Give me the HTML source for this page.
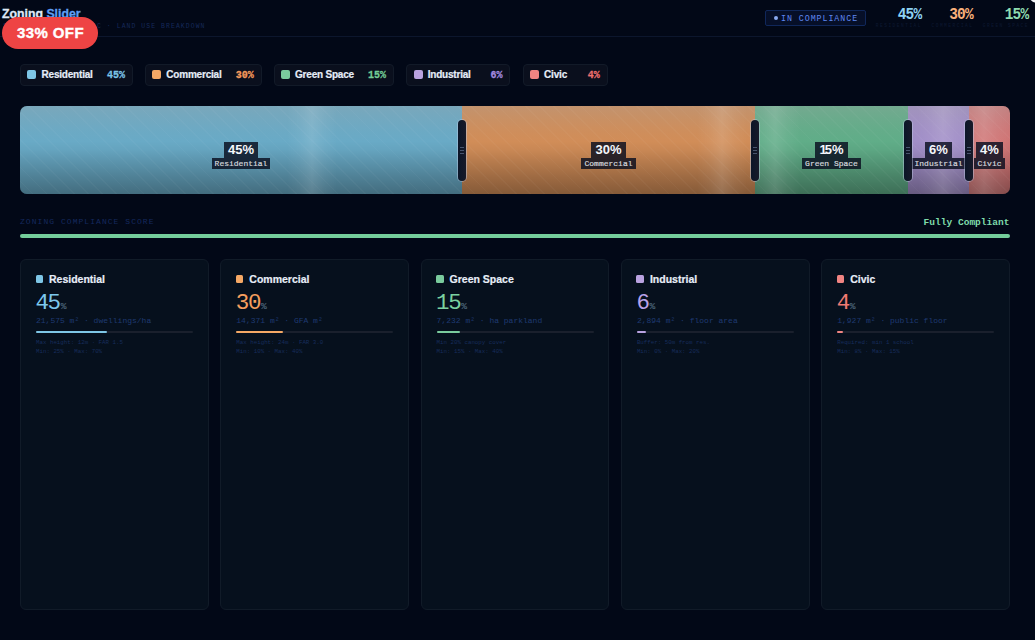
<!DOCTYPE html>
<html><head><meta charset="utf-8">
<style>
*{margin:0;padding:0;box-sizing:border-box}
html,body{width:1035px;height:640px;overflow:hidden;background:#020817}
body{position:relative;font-family:"Liberation Sans",sans-serif;color:#e2e8f0}
.mono{font-family:"Liberation Mono",monospace}
.abs{position:absolute;white-space:nowrap}
/* header */
.hdr-line{position:absolute;left:0;top:36px;width:1035px;height:1px;background:#0c162d}
.title{left:2px;top:6.6px;font-size:12.3px;font-weight:bold;line-height:14px;-webkit-text-stroke:0.3px currentColor}
.title .a{color:#dfe8f6}.title .b{color:#5e9ff5}
.sub{left:3.2px;top:23px;font-size:6.4px;letter-spacing:1.1px;color:#16295a;line-height:8px}
.badge{left:2px;top:17px;width:96px;height:31.5px;border-radius:16px;background:#ee4444;color:#fff;font-weight:bold;font-size:15px;letter-spacing:0.4px;-webkit-text-stroke:0.35px #fff;line-height:31.5px;text-align:center;padding-left:1px}
.comp{left:765px;top:10px;width:101px;height:15.5px;border:1px solid #10275a;background:#060f28;border-radius:2px}
.comp .dot{position:absolute;left:7.5px;top:4.8px;width:4px;height:4px;border-radius:50%;background:#8aa9f0}
.comp .t{position:absolute;left:15px;top:3px;font-size:8.3px;letter-spacing:0.95px;color:#5f87f0;line-height:10px}
.stat{top:6.5px;text-align:right}
.stat .n{font-family:"Liberation Mono",monospace;font-weight:bold;font-size:14.5px;letter-spacing:-0.75px;line-height:16px;display:block;transform:scaleY(1.13);transform-origin:50% 80%}
.stat .l{font-family:"Liberation Mono",monospace;font-size:4.5px;letter-spacing:1.5px;color:#0d1832;display:block;line-height:6px;margin-top:0.5px;margin-right:-0.5px}
/* chips */
.chip{top:64px;height:22px;border:1px solid #121a28;background:#0a0f1d;border-radius:4px}
.chip .sw{position:absolute;left:6.4px;top:5px;width:9px;height:9px;border-radius:2px}
.chip .lb{position:absolute;top:3px;font-size:10px;font-weight:bold;letter-spacing:-0.2px;color:#e6edf8;line-height:14px;-webkit-text-stroke:0.2px #e6edf8}
.chip .pc{position:absolute;right:7px;top:3.8px;font-family:"Liberation Mono",monospace;font-weight:bold;font-size:10px;line-height:14px;transform:scaleY(1.16);transform-origin:50% 50%;-webkit-text-stroke:0.25px currentColor}
/* bar */
.bar{left:20px;top:106px;width:990px;height:88px;border-radius:7px;overflow:hidden}
.seg{position:absolute;top:0;height:88px;overflow:hidden}
.seg .shade{position:absolute;inset:0;background:linear-gradient(180deg,rgba(160,160,160,0.30) 0%,rgba(160,160,160,0.16) 15%,rgba(160,160,160,0.06) 28%,rgba(160,160,160,0) 40%,rgba(0,0,0,0.04) 50%,rgba(0,0,0,0.12) 62%,rgba(0,0,0,0.24) 80%,rgba(0,0,0,0.36) 100%)}
.seg .stripes{position:absolute;inset:0;background:repeating-linear-gradient(45deg,rgba(255,255,255,0) 0px,rgba(255,255,255,0) 8.6px,rgba(255,255,255,0.028) 8.6px,rgba(255,255,255,0.028) 9.8px)}
.seg .shine{position:absolute;top:0;height:88px;width:50px;background:linear-gradient(90deg,rgba(255,255,255,0) 0%,rgba(255,255,255,0.05) 25%,rgba(255,255,255,0.13) 50%,rgba(255,255,255,0.05) 75%,rgba(255,255,255,0) 100%)}
.lab{position:absolute;top:36px;left:-20px;right:-20px;display:flex;flex-direction:column;align-items:center}
.lab .p{display:inline-block;font-weight:bold;font-size:13px;color:#f4f6fa;background:rgba(8,14,30,0.82);padding:0 4px;height:16.2px;line-height:15.5px}
.lab .s{display:inline-block;font-family:"Liberation Mono",monospace;font-size:8px;color:#d4d6dc;-webkit-text-stroke:0.2px #d4d6dc;background:rgba(8,14,30,0.82);padding:0 3px;height:10.5px;line-height:11px}
.handle{position:absolute;top:13.5px;width:8px;height:61.5px;border-radius:4px;background:linear-gradient(90deg,#0b1528,#171a29);box-shadow:0 0 0 1px rgba(190,205,230,0.45)}
.handle i{position:absolute;left:2.3px;width:3.4px;height:1px;background:#48556e}
/* compliance */
.csl{left:20px;top:217px;font-size:8px;letter-spacing:1.05px;color:#15295e;line-height:10px}
.csr{right:25.5px;top:217.2px;font-size:9.55px;font-weight:bold;color:#7fdcab;line-height:12px}
.cbar{left:20px;top:234px;width:990px;height:4px;border-radius:2px;background:#74cd9b}
/* cards */
.card{top:259px;width:188.8px;height:351px;border:1px solid #111b28;background:#06101d;border-radius:6px}
.card .sw{position:absolute;left:14.6px;top:15px;width:7.5px;height:7.5px;border-radius:1.5px}
.card .tt{position:absolute;left:28px;top:12px;font-size:10.5px;font-weight:bold;color:#e8eef8;line-height:14px;white-space:nowrap;-webkit-text-stroke:0.2px #e8eef8}
.card .big{position:absolute;left:14.5px;top:31px;font-family:"Liberation Mono",monospace;font-size:22.5px;letter-spacing:-1.4px;line-height:24px;white-space:nowrap}
.card .big small{font-size:9.5px;letter-spacing:0;color:#4a6478;margin-left:1px;-webkit-text-stroke:0.2px #4a6478}
.card .st{position:absolute;left:15px;top:55.5px;font-family:"Liberation Mono",monospace;font-size:8px;color:#1f3a72;line-height:10px;white-space:nowrap}
.card .trk{position:absolute;left:15px;top:71px;width:157px;height:2px;background:#1a202d;border-radius:1px}
.card .trk b{position:absolute;left:0;top:0;height:2px;border-radius:1px}
.card .nt{position:absolute;left:15px;top:79px;font-family:"Liberation Mono",monospace;font-size:5.8px;color:#172d5c;line-height:8.7px;white-space:nowrap}
</style></head><body>
<div class="hdr-line"></div>
<div class="abs title"><span class="a">Zoning</span> <span class="b">Slider</span></div>
<div class="abs sub mono">SPATIAL ZONING LOGIC · LAND USE BREAKDOWN</div>
<div class="abs badge">33% OFF</div>

<div class="abs comp"><span class="dot"></span><span class="t mono">IN COMPLIANCE</span></div>
<div class="abs stat" style="right:113.5px"><span class="n" style="color:#8ed2f3">45%</span><span class="l">RESIDENTIAL</span></div>
<div class="abs stat" style="right:62px"><span class="n" style="color:#f8b07a">30%</span><span class="l">COMMERCIAL</span></div>
<div class="abs stat" style="right:6.5px"><span class="n" style="color:#8edcb0">15%</span><span class="l">GREEN SPACE</span></div>

<div class="abs chip" style="left:20px;width:113px"><span class="sw" style="background:#7ec6e6"></span><span class="lb" style="left:20.5px">Residential</span><span class="pc" style="color:#7cc4e8">45%</span></div>
<div class="abs chip" style="left:144.8px;width:117px"><span class="sw" style="background:#f5a865"></span><span class="lb" style="left:20.5px">Commercial</span><span class="pc" style="color:#f59a5c">30%</span></div>
<div class="abs chip" style="left:273.5px;width:120.6px"><span class="sw" style="background:#7acb9d"></span><span class="lb" style="left:20.5px">Green Space</span><span class="pc" style="color:#73cc96">15%</span></div>
<div class="abs chip" style="left:406.2px;width:104.3px"><span class="sw" style="background:#b9a2e0"></span><span class="lb" style="left:20.5px">Industrial</span><span class="pc" style="color:#a48be0">6%</span></div>
<div class="abs chip" style="left:522.6px;width:85.1px"><span class="sw" style="background:#f08482"></span><span class="lb" style="left:20.5px">Civic</span><span class="pc" style="color:#ef6f6f">4%</span></div>

<div class="abs bar">
  <div class="seg" style="left:0;width:442px;background:#69aac6"><div class="shade"></div><div class="stripes"></div><div class="shine" style="left:267px"></div>
    <div class="lab"><span class="p">45%</span><span class="s">Residential</span></div></div>
  <div class="seg" style="left:442px;width:293px;background:#d18d58"><div class="shade"></div><div class="stripes"></div><div class="shine" style="left:235px"></div>
    <div class="lab"><span class="p">30%</span><span class="s">Commercial</span></div></div>
  <div class="seg" style="left:735px;width:153px;background:#60ad88"><div class="shade"></div><div class="stripes"></div><div class="shine" style="left:-5px"></div>
    <div class="lab"><span class="p"><span style="letter-spacing:-1.8px">1</span>5%</span><span class="s">Green Space</span></div></div>
  <div class="seg" style="left:888px;width:61px;background:#a18ec8"><div class="shade"></div><div class="stripes"></div><div class="shine" style="left:10px"></div>
    <div class="lab"><span class="p">6%</span><span class="s">Industrial</span></div></div>
  <div class="seg" style="left:949px;width:41px;background:#d07575"><div class="shade"></div><div class="stripes"></div><div class="shine" style="left:-10px"></div>
    <div class="lab"><span class="p">4%</span><span class="s">Civic</span></div></div>
  <div class="handle" style="left:438.2px"><i style="top:27.5px"></i><i style="top:30.5px"></i><i style="top:33.5px"></i></div>
  <div class="handle" style="left:731px"><i style="top:27.5px"></i><i style="top:30.5px"></i><i style="top:33.5px"></i></div>
  <div class="handle" style="left:884px"><i style="top:27.5px"></i><i style="top:30.5px"></i><i style="top:33.5px"></i></div>
  <div class="handle" style="left:945px"><i style="top:27.5px"></i><i style="top:30.5px"></i><i style="top:33.5px"></i></div>
</div>

<div class="abs csl mono">ZONING COMPLIANCE SCORE</div>
<div class="abs csr mono">Fully Compliant</div>
<div class="abs cbar"></div>

<div class="abs card" style="left:20px"><span class="sw" style="background:#7ec6e6"></span><span class="tt">Residential</span>
  <div class="big" style="color:#7cc7ec">45<small>%</small></div>
  <div class="st">21,575 m² · dwellings/ha</div>
  <div class="trk"><b style="width:70.7px;background:#7ec6e6"></b></div>
  <div class="nt">Max height: 12m · FAR 1.5<br>Min: 25% · Max: 70%</div></div>
<div class="abs card" style="left:220.3px"><span class="sw" style="background:#f5a865"></span><span class="tt">Commercial</span>
  <div class="big" style="color:#f59e5e">30<small>%</small></div>
  <div class="st">14,371 m² · GFA m²</div>
  <div class="trk"><b style="width:47px;background:#f5a865"></b></div>
  <div class="nt">Max height: 24m · FAR 3.0<br>Min: 10% · Max: 40%</div></div>
<div class="abs card" style="left:420.6px"><span class="sw" style="background:#7acb9d"></span><span class="tt">Green Space</span>
  <div class="big" style="color:#7bd1a0">15<small>%</small></div>
  <div class="st">7,232 m² · ha parkland</div>
  <div class="trk"><b style="width:23.5px;background:#7acb9d"></b></div>
  <div class="nt">Min 20% canopy cover<br>Min: 15% · Max: 40%</div></div>
<div class="abs card" style="left:620.9px"><span class="sw" style="background:#b9a2e0"></span><span class="tt">Industrial</span>
  <div class="big" style="color:#b8a2ea">6<small>%</small></div>
  <div class="st">2,894 m² · floor area</div>
  <div class="trk"><b style="width:9.4px;background:#b9a2e0"></b></div>
  <div class="nt">Buffer: 50m from res.<br>Min: 0% · Max: 20%</div></div>
<div class="abs card" style="left:821.2px"><span class="sw" style="background:#f08482"></span><span class="tt">Civic</span>
  <div class="big" style="color:#f07a72">4<small>%</small></div>
  <div class="st">1,927 m² · public floor</div>
  <div class="trk"><b style="width:6.3px;background:#f08482"></b></div>
  <div class="nt">Required: min 1 school<br>Min: 8% · Max: 15%</div></div>
<div class="abs" style="left:1030px;top:-3px;width:8px;height:5px;border-radius:50%;background:#f2f4f8;transform:rotate(30deg)"></div>
</body></html>
